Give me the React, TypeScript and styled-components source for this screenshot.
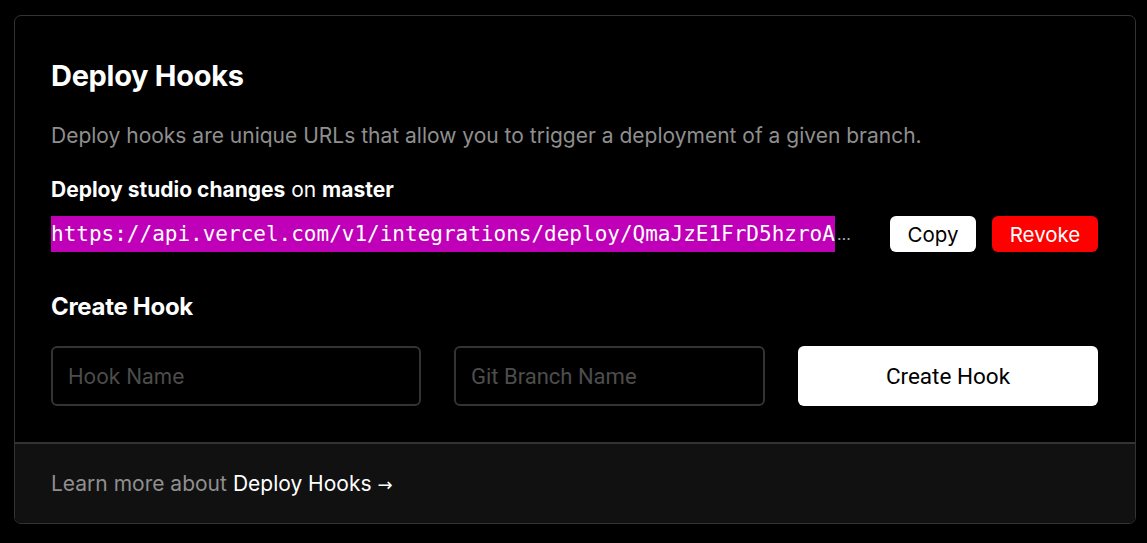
import React from 'react';
import styled, { createGlobalStyle } from 'styled-components';

const GlobalStyle = createGlobalStyle`
  html, body {
    margin: 0;
    padding: 0;
    background: #000;
  }
  body {
    font-family: Inter, "Noto Sans", sans-serif;
    color: #fff;
  }
  * { box-sizing: border-box; }
`;

const Page = styled.div`
  padding: 15px 11px 19px 14px;
`;

const Card = styled.section`
  border: 1px solid #333;
  border-radius: 7px;
  background: #000;
  overflow: hidden;
`;

const Body = styled.div`
  padding: 40px 37px 36px 36px;
  display: flex;
  flex-direction: column;
`;

const Title = styled.h2`
  margin: 0;
  font-size: 29px;
  font-weight: 700;
  line-height: 40px;
  letter-spacing: -0.3px;
`;

const Description = styled.p`
  margin: 25px 0 0;
  font-size: 21px;
  line-height: 30px;
  color: #8f8f8f;
`;

const HookLabel = styled.div`
  margin-top: 26px;
  font-size: 21px;
  line-height: 26px;
  font-weight: 400;
`;

const Strong = styled.strong`
  font-weight: 700;
`;

const HookRow = styled.div`
  display: flex;
  align-items: center;
  margin-top: 13px;
  height: 36px;
`;

const UrlBox = styled.div`
  flex: 1;
  min-width: 0;
  display: flex;
  align-items: center;
  font-family: "DejaVu Sans Mono", "Liberation Mono", monospace;
  font-size: 21px;
  line-height: 36px;
  white-space: nowrap;
  overflow: hidden;
`;

const Selected = styled.span`
  background: #c000b8;
  color: #fff;
`;

const Ellipsis = styled.span`
  color: #aaa;
  font-family: Inter, sans-serif;
  font-size: 16px;
  margin-left: 2px;
`;

const SmallButton = styled.button<{ $danger?: boolean }>`
  height: 36px;
  padding: 0 16px;
  border: none;
  border-radius: 6px;
  font-family: Inter, sans-serif;
  font-size: 20.5px;
  font-weight: 400;
  background: ${p => (p.$danger ? '#ff0000' : '#fff')};
  color: ${p => (p.$danger ? '#fff' : '#000')};
  margin-left: ${p => (p.$danger ? '16px' : '40px')};
  min-width: ${p => (p.$danger ? '106px' : '86px')};
`;

const SubTitle = styled.h3`
  margin: 40px 0 0;
  font-size: 24px;
  line-height: 30px;
  font-weight: 700;
  letter-spacing: -0.3px;
`;

const FormRow = styled.div`
  display: flex;
  gap: 33px;
  margin-top: 24px;
`;

const Input = styled.input<{ $w: number; $roboto?: boolean }>`
  width: ${p => p.$w}px;
  height: 60px;
  background: #000;
  border: 2px solid #333;
  border-radius: 6px;
  padding: 0 15px;
  font-family: ${p => (p.$roboto ? 'Roboto, sans-serif' : 'Inter, sans-serif')};
  font-size: ${p => (p.$roboto ? '22px' : '21px')};
  color: #fff;
  outline: none;
  &::placeholder {
    color: #4d4d4d;
  }
`;

const CreateButton = styled.button`
  flex: 1;
  height: 60px;
  border: none;
  border-radius: 6px;
  background: #fff;
  color: #000;
  font-family: Roboto, sans-serif;
  font-size: 22.5px;
`;

const Footer = styled.footer`
  border-top: 2px solid #333;
  background: #111;
  height: 81px;
  display: flex;
  align-items: center;
  padding: 0 36px;
  font-size: 21px;
  color: #8f8f8f;
`;

const FooterLink = styled.a`
  color: #fff;
  text-decoration: none;
  margin-left: 6px;
`;

const Arrow = styled.span`
  font-family: "DejaVu Sans", sans-serif;
  font-size: 18px;
  margin-left: 6px;
`;

export default function App() {
  return (
    <>
      <GlobalStyle />
      <Page>
        <Card>
          <Body>
            <Title>Deploy Hooks</Title>
            <Description>
              Deploy hooks are unique URLs that allow you to trigger a deployment of a given branch.
            </Description>
            <HookLabel>
              <Strong>Deploy studio changes</Strong> on <Strong>master</Strong>
            </HookLabel>
            <HookRow>
              <UrlBox>
                <Selected>https://api.vercel.com/v1/integrations/deploy/QmaJzE1FrD5hzroA</Selected>
                <Ellipsis>…</Ellipsis>
              </UrlBox>
              <SmallButton>Copy</SmallButton>
              <SmallButton $danger>Revoke</SmallButton>
            </HookRow>
            <SubTitle>Create Hook</SubTitle>
            <FormRow>
              <Input $w={370} placeholder="Hook Name" />
              <Input $w={311} $roboto placeholder="Git Branch Name" />
              <CreateButton>Create Hook</CreateButton>
            </FormRow>
          </Body>
          <Footer>
            Learn more about<FooterLink href="#">Deploy Hooks<Arrow>→</Arrow></FooterLink>
          </Footer>
        </Card>
      </Page>
    </>
  );
}
